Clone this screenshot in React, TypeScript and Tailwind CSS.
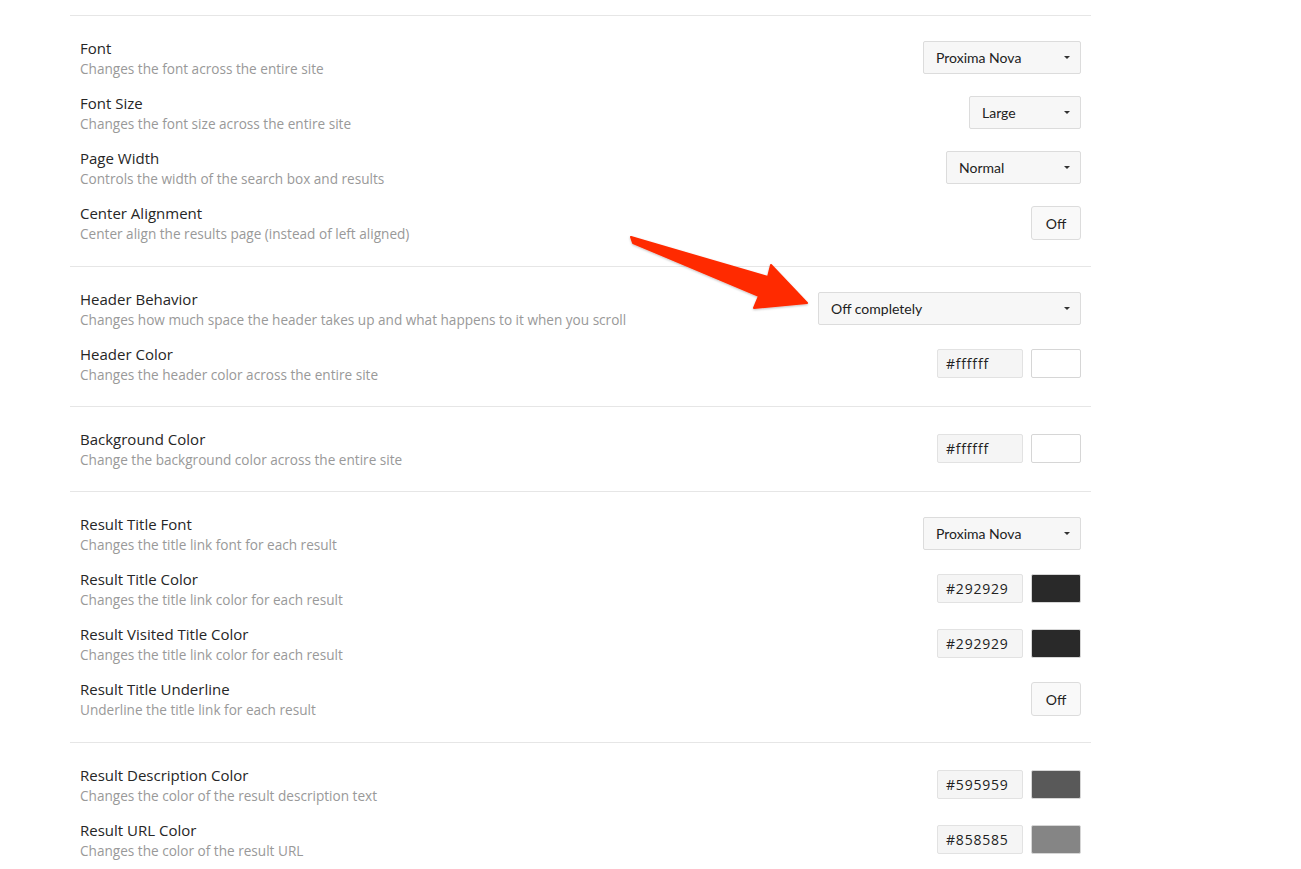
import React from "react";

type Row =
  | { title: string; desc: string; kind: "select"; value: string; w: string }
  | { title: string; desc: string; kind: "toggle" }
  | { title: string; desc: string; kind: "color"; hex: string; swatch: string };

const sections: Row[][] = [
  [
    { title: "Font", desc: "Changes the font across the entire site", kind: "select", value: "Proxima Nova", w: "w-[158px]" },
    { title: "Font Size", desc: "Changes the font size across the entire site", kind: "select", value: "Large", w: "w-[112px]" },
    { title: "Page Width", desc: "Controls the width of the search box and results", kind: "select", value: "Normal", w: "w-[135px]" },
    { title: "Center Alignment", desc: "Center align the results page (instead of left aligned)", kind: "toggle" },
  ],
  [
    { title: "Header Behavior", desc: "Changes how much space the header takes up and what happens to it when you scroll", kind: "select", value: "Off completely", w: "w-[263px]" },
    { title: "Header Color", desc: "Changes the header color across the entire site", kind: "color", hex: "#ffffff", swatch: "#ffffff" },
  ],
  [
    { title: "Background Color", desc: "Change the background color across the entire site", kind: "color", hex: "#ffffff", swatch: "#ffffff" },
  ],
  [
    { title: "Result Title Font", desc: "Changes the title link font for each result", kind: "select", value: "Proxima Nova", w: "w-[158px]" },
    { title: "Result Title Color", desc: "Changes the title link color for each result", kind: "color", hex: "#292929", swatch: "#292929" },
    { title: "Result Visited Title Color", desc: "Changes the title link color for each result", kind: "color", hex: "#292929", swatch: "#292929" },
    { title: "Result Title Underline", desc: "Underline the title link for each result", kind: "toggle" },
  ],
  [
    { title: "Result Description Color", desc: "Changes the color of the result description text", kind: "color", hex: "#595959", swatch: "#595959" },
    { title: "Result URL Color", desc: "Changes the color of the result URL", kind: "color", hex: "#858585", swatch: "#858585" },
  ],
];

function Control({ row }: { row: Row }) {
  if (row.kind === "select") {
    return (
      <div className={`${row.w} mt-[3px] h-[33px] flex items-center justify-between pl-[12px] pr-[10px] bg-[#f7f7f7] border border-[#dcdcdc] rounded-[2px] text-[14px] text-[#222] font-['Lato',sans-serif]`}>
        <span>{row.value}</span>
        <span className="w-0 h-0 border-l-[3px] border-r-[3px] border-t-[3px] border-l-transparent border-r-transparent border-t-[#333]" />
      </div>
    );
  }
  if (row.kind === "toggle") {
    return (
      <div className="mt-[3px] w-[50px] h-[34px] flex items-center justify-center bg-[#f9f9f9] border border-[#dcdcdc] rounded-[3px] text-[14px] text-[#222] font-['Lato',sans-serif]">
        Off
      </div>
    );
  }
  return (
    <div className="mt-[5px] flex items-center gap-[8px]">
      <div className="w-[86px] h-[29px] flex items-center pl-[8px] bg-[#f5f5f5] border border-[#e2e2e2] rounded-[2px] text-[14px] tracking-[0.8px] text-[#222] font-['Open_Sans',sans-serif]">
        {row.hex}
      </div>
      <div
        className="w-[50px] h-[29px] border border-[#d6d6d6] rounded-[2px]"
        style={{ backgroundColor: row.swatch }}
      />
    </div>
  );
}

export default function App() {
  return (
    <div
      className="relative w-[1301px] h-[869px] bg-white overflow-hidden"
      style={{ fontFamily: "'Open Sans', Lato, sans-serif" }}
    >
      <div className="ml-[70px] w-[1021px] pt-[15px]">
        {sections.map((sec, i) => (
          <div
            key={i}
            className={`border-t border-[#e6e6e6] pt-[22px] px-[10px] flex flex-col gap-[14px] ${sec.length === 4 ? "pb-[22px]" : "pb-[21px]"}`}
          >
            {sec.map((row) => (
              <div key={row.title} className="h-[41px] flex items-start justify-between">
                <div className="flex flex-col pt-[1px]">
                  <div className="text-[15px] leading-[18px] text-[#262626]">{row.title}</div>
                  <div className="mt-[2px] text-[13.6px] leading-[20px] text-[#999]">{row.desc}</div>
                </div>
                <Control row={row} />
              </div>
            ))}
          </div>
        ))}
      </div>
      <svg className="absolute left-0 top-0 pointer-events-none" width="1301" height="869">
        <defs>
          <filter id="sh" x="-10%" y="-10%" width="120%" height="130%">
            <feDropShadow dx="0" dy="1" stdDeviation="1.2" floodColor="#000" floodOpacity="0.25" />
          </filter>
        </defs>
        <polygon
          points="631,237 768,277 771,265 807,303 754,308 759,296 633,243"
          fill="#ff2a00"
          stroke="#ff2a00"
          strokeWidth="2"
          strokeLinejoin="round"
          filter="url(#sh)"
        />
      </svg>
    </div>
  );
}
